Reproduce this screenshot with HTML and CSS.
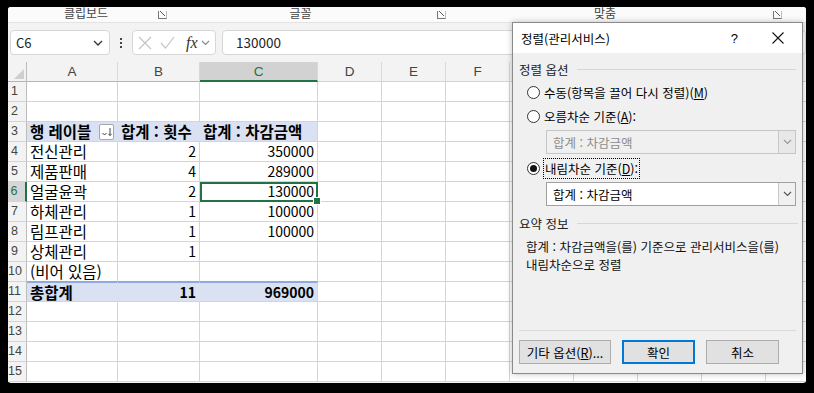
FILE: index.html
```html
<!DOCTYPE html>
<html lang="ko">
<head>
<meta charset="utf-8">
<link rel="stylesheet" href="styles.css">
</head>
<body>
<div class="screen">
  <div class="ribbon">
    <div class="rgroup g1"><span class="rlabel">클립보드</span><span class="launch"></span></div>
    <div class="rgroup g2"><span class="rlabel">글꼴</span><span class="launch"></span></div>
    <div class="rgroup g3"><span class="rlabel">맞춤</span><span class="launch"></span></div>
  </div>

  <div class="fbar">
    <div class="namebox"><span>C6</span>
      <svg class="chev" width="10" height="6" viewBox="0 0 10 6"><path d="M1 1l4 4 4-4" fill="none" stroke="#333" stroke-width="1.3"/></svg>
    </div>
    <div class="vdots"><i></i><i></i><i></i></div>
    <div class="fnbox">
      <svg width="14" height="14" viewBox="0 0 14 14"><path d="M1 1l12 12M13 1L1 13" stroke="#c4c4c4" stroke-width="1.2" fill="none"/></svg>
      <svg width="15" height="14" viewBox="0 0 15 14"><path d="M1 7l4.5 5L14 1" stroke="#c4c4c4" stroke-width="1.2" fill="none"/></svg>
      <span class="fx">fx</span>
      <svg width="9" height="6" viewBox="0 0 9 6"><path d="M1 1l3.5 3.5L8 1" fill="none" stroke="#888" stroke-width="1.1"/></svg>
    </div>
    <div class="finput">130000</div>
  </div>

  <div class="sheet">
    <div class="row hdr">
      <div class="rh corner"><span class="tri"></span></div>
      <div class="ch">A</div><div class="ch">B</div><div class="ch sel">C</div>
      <div class="rest hrest"><span>D</span><span>E</span><span>F</span><span>G</span><span>H</span><span>I</span></div>
    </div>
    <div class="row"><div class="rh">1</div><div class="c"></div><div class="c"></div><div class="c"></div><div class="rest"></div></div>
    <div class="row"><div class="rh">2</div><div class="c"></div><div class="c"></div><div class="c"></div><div class="rest"></div></div>
    <div class="row pv"><div class="rh">3</div>
      <div class="c t b lab">행 레이블 <span class="filt"><svg width="12" height="10" viewBox="0 0 12 10"><path d="M1.5 6l2 2 2-2" fill="none" stroke="#444" stroke-width="1"/><path d="M9 1v7.5M7.3 6.8L9 8.5l1.7-1.7" fill="none" stroke="#444" stroke-width="1"/></svg></span></div>
      <div class="c t b ov">합계 : 횟수</div><div class="c t b">합계 : 차감금액</div><div class="rest"></div></div>
    <div class="row"><div class="rh">4</div><div class="c t">전신관리</div><div class="c n">2</div><div class="c n">350000</div><div class="rest"></div></div>
    <div class="row"><div class="rh">5</div><div class="c t">제품판매</div><div class="c n">4</div><div class="c n">289000</div><div class="rest"></div></div>
    <div class="row"><div class="rh selr">6</div><div class="c t">얼굴윤곽</div><div class="c n">2</div><div class="c n active">130000<span class="handle"></span></div><div class="rest"></div></div>
    <div class="row"><div class="rh">7</div><div class="c t">하체관리</div><div class="c n">1</div><div class="c n">100000</div><div class="rest"></div></div>
    <div class="row"><div class="rh">8</div><div class="c t">림프관리</div><div class="c n">1</div><div class="c n">100000</div><div class="rest"></div></div>
    <div class="row"><div class="rh">9</div><div class="c t">상체관리</div><div class="c n">1</div><div class="c"></div><div class="rest"></div></div>
    <div class="row"><div class="rh">10</div><div class="c t">(비어 있음)</div><div class="c"></div><div class="c"></div><div class="rest"></div></div>
    <div class="row pv tot"><div class="rh">11</div><div class="c t b">총합계</div><div class="c n b">11</div><div class="c n b">969000</div><div class="rest"></div></div>
    <div class="row"><div class="rh">12</div><div class="c"></div><div class="c"></div><div class="c"></div><div class="rest"></div></div>
    <div class="row"><div class="rh">13</div><div class="c"></div><div class="c"></div><div class="c"></div><div class="rest"></div></div>
    <div class="row"><div class="rh">14</div><div class="c"></div><div class="c"></div><div class="c"></div><div class="rest"></div></div>
    <div class="row"><div class="rh">15</div><div class="c"></div><div class="c"></div><div class="c"></div><div class="rest"></div></div>
  </div>

  <div class="dialog">
    <div class="dtitle">
      <span class="dname">정렬(관리서비스)</span>
      <span class="dhelp">?</span>
      <svg class="dclose" width="12" height="12" viewBox="0 0 12 12"><path d="M0.5 0.5l11 11M11.5 0.5l-11 11" stroke="#111" stroke-width="1.1" fill="none"/></svg>
    </div>
    <div class="dbody">
      <div class="glabel"><span>정렬 옵션</span><i></i></div>
      <div class="radio"><span class="rb"></span><span>수동(항목을 끌어 다시 정렬)(<u>M</u>)</span></div>
      <div class="radio"><span class="rb"></span><span>오름차순 기준(<u>A</u>):</span></div>
      <div class="combo dis"><span>합계 : 차감금액</span><span class="cbtn"><svg width="9" height="6" viewBox="0 0 9 6"><path d="M1 1l3.5 3.5L8 1" fill="none" stroke="#999" stroke-width="1.1"/></svg></span></div>
      <div class="radio r3"><span class="rb on"></span><span class="focus">내림차순 기준(<u>D</u>):</span></div>
      <div class="combo"><span>합계 : 차감금액</span><span class="cbtn"><svg width="9" height="6" viewBox="0 0 9 6"><path d="M1 1l3.5 3.5L8 1" fill="none" stroke="#555" stroke-width="1.1"/></svg></span></div>
      <div class="glabel g2"><span>요약 정보</span><i></i></div>
      <p class="summary">합계 : 차감금액을(를) 기준으로 관리서비스을(를)<br>내림차순으로 정렬</p>
      <div class="sep"></div>
      <div class="buttons">
        <button class="btn wide">기타 옵션(<u>R</u>)...</button>
        <button class="btn def">확인</button>
        <button class="btn">취소</button>
      </div>
    </div>
  </div>
</div>
</body>
</html>
```

FILE: styles.css
```css
* { box-sizing: border-box; }
html, body { margin: 0; padding: 0; }
body {
  background: #000;
  width: 814px;
  height: 393px;
  overflow: hidden;
  font-family: "Noto Sans CJK KR", "Noto Sans", sans-serif;
}
.screen {
  position: relative;
  margin: 7px 8px 0 8px;
  width: 798px;
  height: 376px;
  background: #f3f3f3;
  overflow: hidden;
  border-radius: 3px;
}

/* ribbon strip */
.ribbon {
  display: flex;
  height: 16px;
  background: #fbfbfb;
  border-bottom: 1px solid #e3e3e3;
  overflow: hidden;
}
.rgroup {
  position: relative;
  display: flex;
  justify-content: center;
  height: 16px;
}
.g1 { width: 162px; }
.g2 { width: 279px; }
.g3 { width: 336px; }
.rlabel {
  font-size: 12px;
  line-height: 14px;
  color: #444;
  margin-top: -1px;
}
.g1 .rlabel { margin-right: 6px; }
.g2 .rlabel { margin-right: 18px; }
.g3 .rlabel { margin-right: 24px; }
.launch {
  position: absolute;
  right: 3px;
  top: 4px;
  width: 9px;
  height: 8px;
  border-left: 1px solid #777;
  border-bottom: 1px solid #777;
  border-right: 1px solid #bbb;
}
.launch::after {
  content: "";
  position: absolute;
  left: 1px; top: 0px;
  width: 5px; height: 5px;
  background: linear-gradient(45deg, transparent 45%, #555 45%, #555 58%, transparent 58%);
}

/* formula bar */
.fbar {
  display: flex;
  align-items: center;
  height: 25px;
  margin-top: 7px;
  padding-left: 2px;
}
.namebox {
  width: 100px;
  height: 25px;
  background: #fff;
  border: 1px solid #d6d6d6;
  border-radius: 4px;
  display: flex;
  align-items: center;
  justify-content: space-between;
  padding: 0 6px 0 5px;
  font-size: 13px;
  color: #222;
}
.vdots {
  width: 22px;
  display: flex;
  flex-direction: column;
  align-items: center;
  gap: 2px;
}
.vdots i { width: 2px; height: 2px; background: #444; display: block; }
.fnbox {
  width: 84px;
  height: 25px;
  background: #fff;
  border: 1px solid #d6d6d6;
  border-radius: 4px;
  display: flex;
  align-items: center;
  padding-left: 5px;
  gap: 8px;
}
.fx {
  font-family: "Liberation Serif", serif;
  font-style: italic;
  font-size: 16px;
  color: #333;
  margin-left: 3px;
  margin-right: -5px;
}
.finput {
  margin-left: 6px;
  flex: 1;
  height: 25px;
  background: #fff;
  border: 1px solid #d6d6d6;
  border-radius: 4px;
  padding-left: 13px;
  font-size: 13.5px;
  line-height: 23px;
  color: #222;
}

/* sheet */
.sheet {
  margin-top: 7px;
  background: #fff;
}
.row {
  display: flex;
  height: 20px;
}
.rh {
  width: 19px;
  flex: none;
  background: #f3f3f3;
  border-bottom: 1px solid #d4d4d4;
  border-right: 1px solid #bdbdbd;
  font-size: 12.5px;
  line-height: 19px;
  color: #444;
  text-align: center;
  padding-right: 5px;
  white-space: nowrap;
  overflow: visible;
  font-family: "Liberation Sans", sans-serif;
}
.rh.selr {
  background: #d6d6d6;
  border-right: 2px solid #217346;
  color: #217346;
}
.corner { position: relative; border-bottom: 1px solid #b5b5b5; }
.tri {
  position: absolute;
  right: 2px; bottom: 2px;
  width: 0; height: 0;
  border-left: 10px solid transparent;
  border-bottom: 10px solid #cfcfcf;
}
.ch {
  flex: none;
  background: #f3f3f3;
  border-right: 1px solid #d8d8d8;
  border-bottom: 1px solid #b5b5b5;
  font-family: "Liberation Sans", sans-serif;
  font-size: 13.5px;
  line-height: 19px;
  color: #444;
  text-align: center;
}
.hdr .ch:nth-child(2) { width: 91px; }
.hdr .ch:nth-child(3) { width: 82px; }
.hdr .ch:nth-child(4) { width: 118px; }
.ch.sel {
  background: #d2d2d2;
  border-bottom: 2px solid #217346;
  color: #217346;
}
.hrest {
  display: flex;
  background: #f3f3f3;
  border-bottom: 1px solid #b5b5b5;
}
.hrest span {
  width: 64px;
  flex: none;
  border-right: 1px solid #d8d8d8;
  text-align: center;
  font-family: "Liberation Sans", sans-serif;
  font-size: 13.5px;
  line-height: 19px;
  color: #444;
}
.c {
  flex: none;
  position: relative;
  border-right: 1px solid #d4d4d4;
  border-bottom: 1px solid #d4d4d4;
  font-size: 15.5px;
  line-height: 19px;
  color: #000;
  white-space: nowrap;
  padding: 0 3px;
}
.row .c:nth-child(2) { width: 91px; }
.row .c:nth-child(3) { width: 82px; }
.row .c:nth-child(4) { width: 118px; }
.c.n { text-align: right; font-size: 14px; }
.c.b { font-weight: 700; }
.rest {
  flex: 1;
  border-bottom: 1px solid #d4d4d4;
  background-image: repeating-linear-gradient(to right, transparent 0, transparent 63px, #d4d4d4 63px, #d4d4d4 64px);
}
.pv .c { background: #d9e1f2; border-right-color: #d9e1f2; }
.pv .c:nth-child(4) { border-right-color: #d4d4d4; }
.pv .c.ov { overflow: visible; }
.tot .c { border-top: 1px solid #8ea9db; line-height: 18px; }
.row:has(+ .tot) .c { border-bottom-color: #8ea9db; }
.lab { display: flex; align-items: center; }
.filt {
  display: inline-flex;
  align-items: center;
  justify-content: center;
  width: 16px;
  height: 16px;
  margin-left: 8px;
  background: #fff;
  border: 1px solid #a8a8a8;
  border-radius: 2px;
}
.c.active {
  outline: 2px solid #217346;
  outline-offset: -2px;
  z-index: 2;
}
.handle {
  position: absolute;
  right: -4px;
  bottom: -4px;
  width: 6px;
  height: 6px;
  background: #217346;
  border: 1px solid #fff;
  box-sizing: content-box;
}

/* dialog */
.dialog {
  position: absolute;
  left: 504px;
  top: 15px;
  width: 291px;
  height: 352px;
  background: #f0f0f0;
  border: 1px solid #8a8a8a;
  box-shadow: 0 0 6px rgba(0,0,0,0.25);
  font-size: 12px;
  color: #000;
  display: flex;
  flex-direction: column;
}
.dtitle {
  height: 30px;
  background: #fff;
  display: flex;
  align-items: center;
  padding-left: 8px;
  flex: none;
}
.dname { font-size: 12.5px; }
.dhelp {
  margin-left: auto;
  font-family: "Liberation Sans", sans-serif;
  font-size: 13px;
  margin-right: 34px;
}
.dclose { margin-right: 18px; }
.dbody {
  flex: 1;
  display: flex;
  flex-direction: column;
  padding: 8px 6px 9px 6px;
}
.glabel {
  display: flex;
  align-items: center;
  height: 16px;
  font-size: 12.5px;
  color: #222;
}
.glabel i {
  flex: 1;
  height: 1px;
  background: #d6d6d6;
  margin-left: 8px;
}
.glabel.g2 { margin-top: 9px; }
.radio {
  display: flex;
  align-items: center;
  height: 18px;
  margin-left: 8px;
  font-size: 12.5px;
  gap: 4px;
}
.glabel + .radio { margin-top: 6px; }
.radio + .radio { margin-top: 6px; }
.rb {
  width: 13px;
  height: 13px;
  border: 1px solid #333;
  border-radius: 50%;
  background: #fff;
  display: inline-flex;
  align-items: center;
  justify-content: center;
  flex: none;
}
.rb.on::after {
  content: "";
  width: 7px;
  height: 7px;
  border-radius: 50%;
  background: #111;
}
.focus { outline: 1px dotted #000; padding: 0 1px; }
.r3 { margin-top: 5px; }
u { text-decoration: underline; text-underline-offset: 1px; }
.combo {
  margin: 5px 0 0 27px;
  height: 24px;
  display: flex;
  align-items: center;
  background: #fff;
  border: 1px solid #a0a0a0;
  padding-left: 6px;
  font-size: 12.5px;
}
.combo .cbtn {
  margin-left: auto;
  width: 17px;
  height: 22px;
  border-left: 1px solid #c8c8c8;
  background: #f0f0f0;
  display: flex;
  align-items: center;
  justify-content: center;
}
.combo.dis { background: #f0f0f0; border-color: #c6c6c6; color: #8c8c8c; }
.combo.dis .cbtn { background: #e8e8e8; }
.summary {
  margin: 7px 0 0 7px;
  font-size: 12.5px;
  line-height: 18px;
  color: #111;
}
.sep {
  margin-top: auto;
  height: 1px;
  background: #dadada;
}
.buttons {
  display: flex;
  margin-top: 9px;
  gap: 11px;
}
.btn {
  width: 73px;
  height: 24px;
  background: #e1e1e1;
  border: 1px solid #adadad;
  font-family: "Noto Sans CJK KR", sans-serif;
  font-size: 12.5px;
  color: #000;
  padding: 0;
}
.btn.wide { width: 92px; }
.btn.def { border: 2px solid #0078d7; }
```
